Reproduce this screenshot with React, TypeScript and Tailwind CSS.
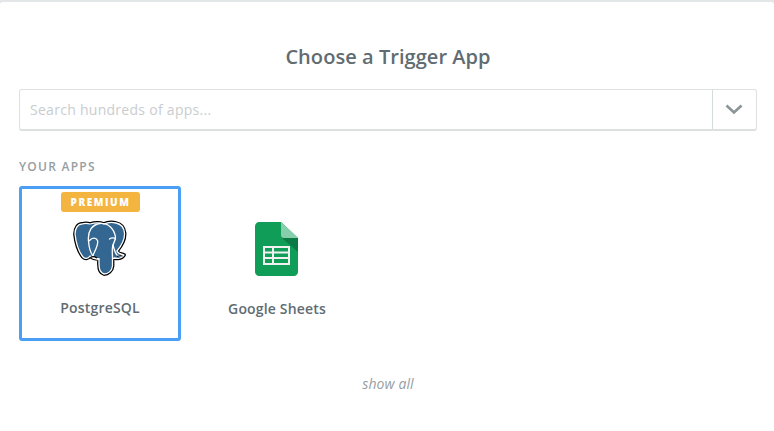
const sans = "[font-family:'Open_Sans',sans-serif]";

const elephant =
  "M20 6C27 4 31 5 34 6C38 4 42 4 46 5C51 6 54 10 54.5 15C55 21 52 27 47 33C48 36 51 36 54 37C52 40 48 41 44 40L42.5 41L42.5 48C42 53 38 56 34 56C30 55 29 52 29 46L29 41C25 41 22 40 20 38C18 41 15 41 13 39C9 34 6 25 5 16C5 10 8 6 12 6C15 5 17 5 20 6Z";

function PostgresLogo() {
  return (
    <svg width="60" height="60" viewBox="0 0 60 60" className="block">
      <path d={elephant} fill="#000" stroke="#000" strokeWidth="3.8" strokeLinejoin="round" />
      <path d={elephant} fill="#336791" stroke="#fff" strokeWidth="1.3" strokeLinejoin="round" />
      {/* face lines */}
      <g fill="none" stroke="#fff" strokeWidth="1.3" strokeLinecap="round" strokeLinejoin="round">
        <path d="M18.5 23C17.5 13 22 6.5 30 5.5C38 5 44 10 45.5 19C45.5 23 43 25 42.5 29C42 33 42.5 37 42.5 41" />
        <path d="M18.5 23C19 30 20 34 23 38C24 40 26 41 29 41" />
        <path d="M19.5 22.5C22 19.5 26 19 27.5 22.5C28.5 26 26 31 24.5 34C23.5 36 23 37 23 38" />
        <path d="M39.5 21C41.5 19.5 44.5 19.5 45.5 21" />
        <path d="M43 27C44 31 45 35 47 37C49 38 51 38 53 37.5" />
      </g>
      {/* jaw shadows */}
      <path d="M20.5 39.5C23 38 25.5 39 27 40" fill="none" stroke="#000" strokeWidth="1.2" />
      <path d="M47 38.5C49 37.5 51 37.5 52.5 38" fill="none" stroke="#000" strokeWidth="1" />
    </svg>
  );
}

function SheetsLogo() {
  return (
    <svg width="43" height="54" viewBox="0 0 43 54" className="block">
      <path d="M4 0H26L43 16V50C43 52 41 54 39 54H4C2 54 0 52 0 50V4C0 2 2 0 4 0Z" fill="#0f9d58" />
      <path d="M27 16L43 30V16Z" fill="#0b7a45" />
      <path d="M26 0L43 16H29C27 16 26 15 26 13Z" fill="#87ceac" />
      <path fillRule="evenodd" clipRule="evenodd" d="M8 24H35V43H8ZM10 26V29.5H17V26ZM19 26V29.5H33V26ZM10 31.5V35H17V31.5ZM19 31.5V35H33V31.5ZM10 37V41H17V37ZM19 37V41H33V37Z" fill="#f1f1f1" />
    </svg>
  );
}

export default function App() {
  return (
    <div className={`h-[431px] w-[774px] overflow-hidden bg-[#e3e7e8] pt-[2px] ${sans}`}>
      <div className="h-full rounded-t-[3px] bg-white px-[19px] pr-[17px]">
        <h1 className="pt-[40px] text-center text-[20px] leading-[30px] font-semibold tracking-[0.05px] text-[#5f6c72]">
          Choose a Trigger App
        </h1>

        {/* search */}
        <div className="mt-[17px] flex h-[42px] rounded-[3px] border border-[#dce0e1] border-b-2">
          <div className="flex-1 pl-[10px] text-[14px] leading-[39px] tracking-[0.28px] text-[#c9cdcf]">Search hundreds of apps...</div>
          <div className="flex w-[44px] items-center justify-center border-l border-[#d5dadb] pr-[2px]">
            <svg width="18" height="11" viewBox="0 0 18 11" fill="none" stroke="#8a9499" strokeWidth="2.6">
              <path d="M1.5 1.5L9 8.5L16.5 1.5" />
            </svg>
          </div>
        </div>

        <div className="mt-[27px] text-[12px] leading-[18px] font-semibold tracking-[1.25px] text-[#969ea2]">YOUR APPS</div>

        {/* app tiles */}
        <div className="mt-[10px] flex gap-[15px]">
          <div className="relative flex h-[155px] w-[162px] flex-col items-center rounded-[3px] border-[3px] border-[#4a9ff5]">
            <div className="absolute top-[3px] flex h-[20px] w-[79px] items-center justify-center rounded-[3px] bg-[#f3b440] pl-[1px] text-[10px] font-extrabold tracking-[1.55px] text-white">
              PREMIUM
            </div>
            <div className="mt-[29px]">
              <PostgresLogo />
            </div>
            <div className="mt-[20px] text-[14px] leading-[20px] font-semibold tracking-[0.2px] text-[#5f6c72]">PostgreSQL</div>
          </div>
          <div className="flex h-[155px] w-[162px] flex-col items-center">
            <div className="mt-[36px] pr-[1px]">
              <SheetsLogo />
            </div>
            <div className="mt-[23px] text-[14px] leading-[20px] font-semibold tracking-[0.17px] text-[#5f6c72]">Google Sheets</div>
          </div>
        </div>

        <div className="mt-[33px] text-center text-[14px] leading-[20px] tracking-[0.1px] text-[#969ea2] italic">show all</div>
      </div>
    </div>
  );
}
